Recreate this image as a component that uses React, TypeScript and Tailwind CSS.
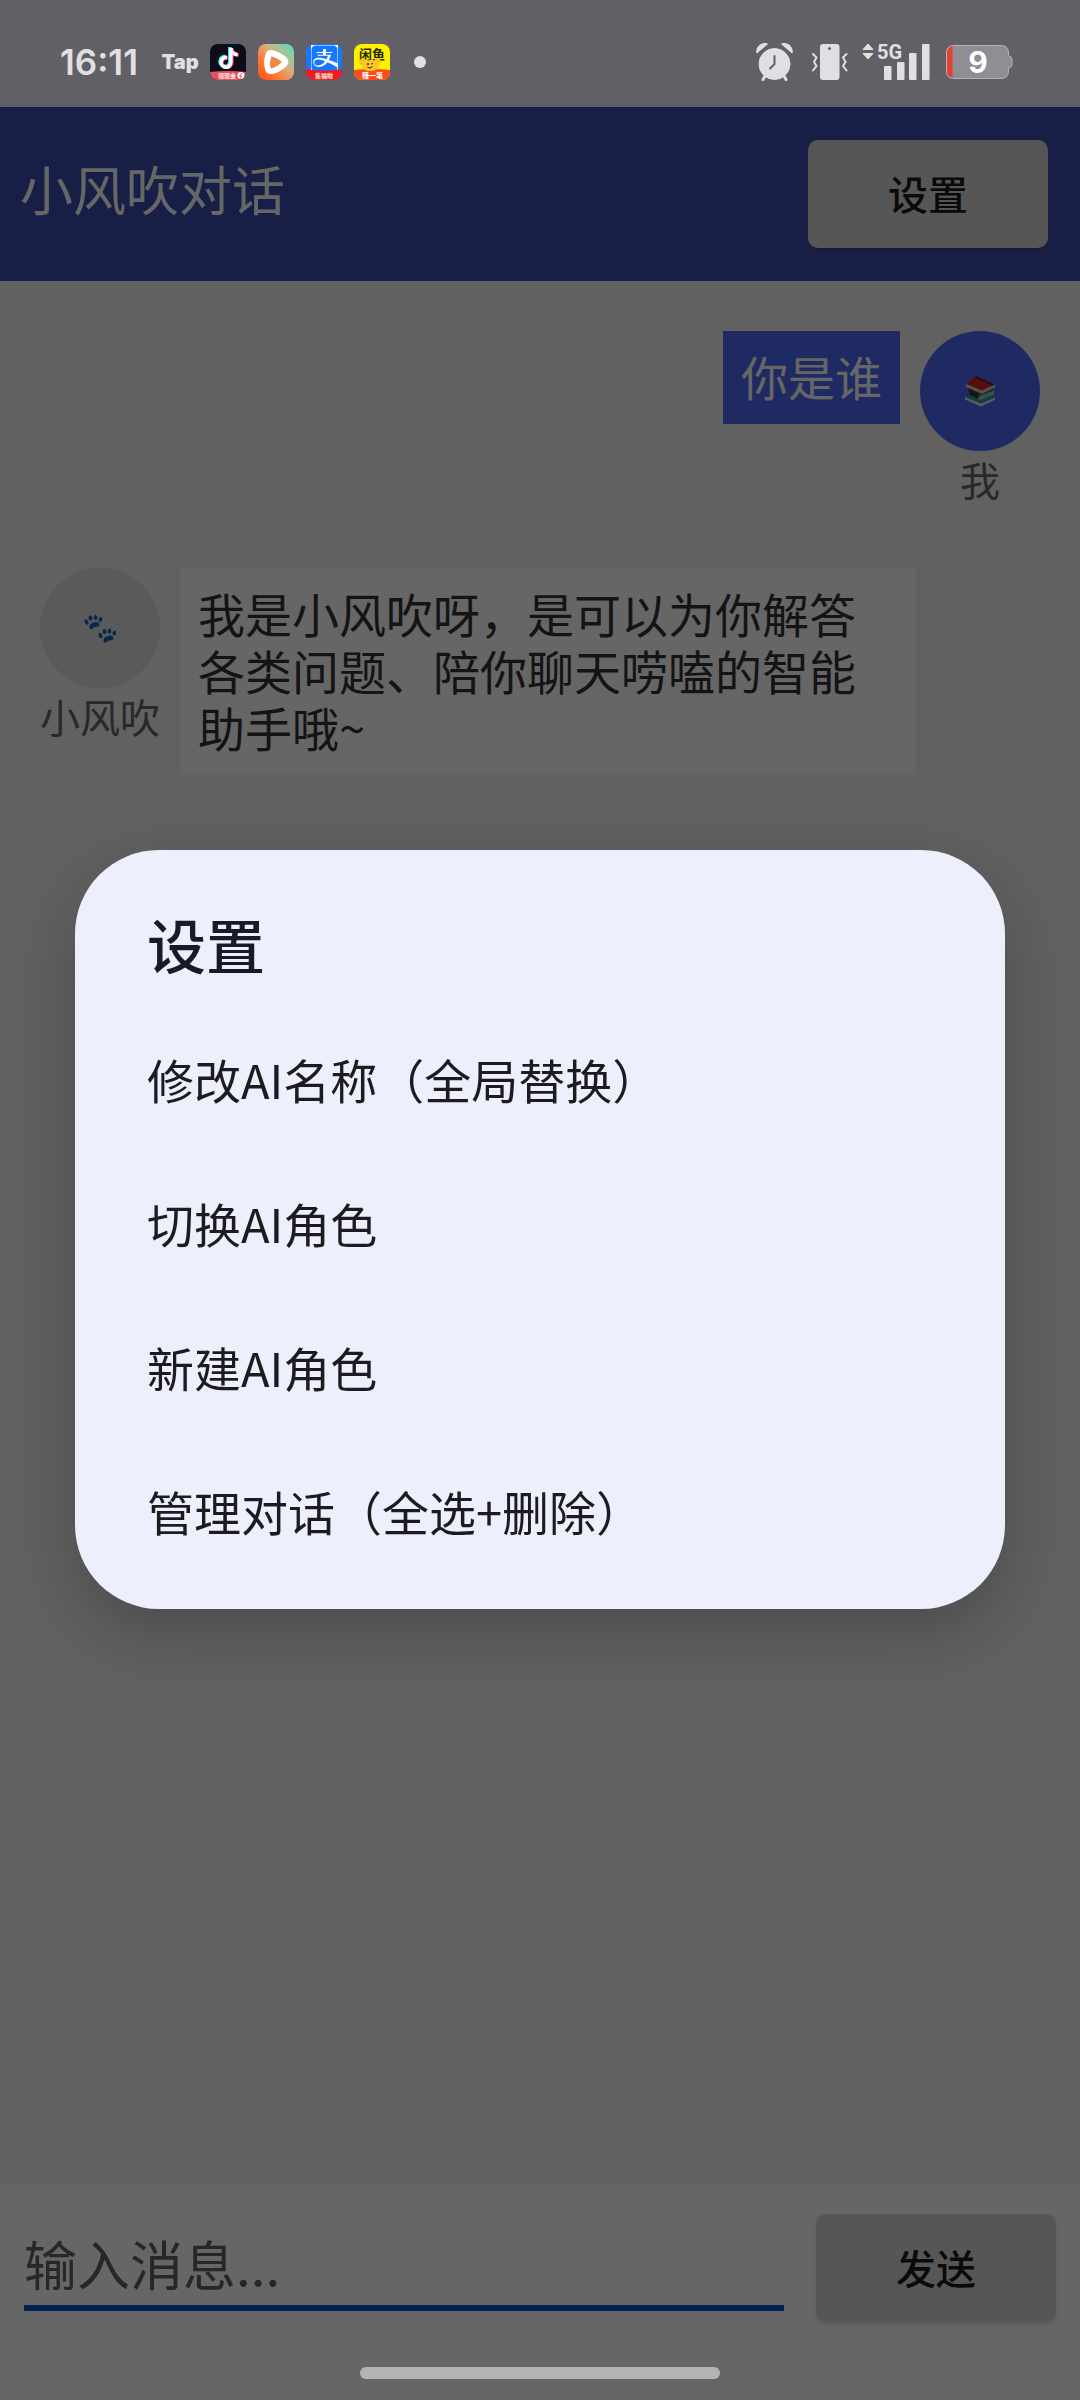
import { useState } from "react";
import { FaAlipay, FaTiktok } from "react-icons/fa";

const menuItems = ["修改AI名称（全局替换）", "切换AI角色", "新建AI角色", "管理对话（全选+删除）"];

function DouyinIcon() {
    return (
        <div className="relative size-9 overflow-hidden rounded-lg bg-[#0d0c18]">
            <FaTiktok className="absolute left-[7px] top-[3px] text-[21px] text-[#25f4ee]" />
            <FaTiktok className="absolute left-[9px] top-[4px] text-[21px] text-[#fe2c55]" />
            <FaTiktok className="absolute left-[8px] top-[4px] text-[21px] text-white" />
            <svg viewBox="0 0 36 9" className="absolute bottom-0 left-0 w-full">
                <path d="M0 1 Q18 -1 36 1 V9 H0 Z" fill="#e8505f" />
                <text x="8" y="7" fontSize="6" fontWeight="700" fill="#ffe9e9">领现金</text>
                <circle cx="31" cy="4.500" r="3.500" fill="#fff" />
                <path d="M32 2 L29.500 5 H31.500 L30.500 7.500" stroke="#e8505f" fill="none" />
            </svg>
        </div>
    );
}

function VideoIcon() {
    return (
        <svg viewBox="0 0 36 36" className="size-9">
            <defs>
                <linearGradient id="video" x1="1" y1="0" x2="0.100" y2="0.900">
                    <stop offset="0" stopColor="#4fe3bd" />
                    <stop offset="0.450" stopColor="#d5b183" />
                    <stop offset="0.750" stopColor="#ff7a35" />
                    <stop offset="1" stopColor="#ff5a1c" />
                </linearGradient>
            </defs>
            <rect width="36" height="36" rx="8" fill="url(#video)" />
            <path d="M9.500 10.500 Q10.500 7 15 8.500 Q23 11 27.500 15.500 Q29.500 18 27 21 Q21 26.500 14 28 Q10 28.500 9 25 Q7 18 9.500 10.500 Z" fill="#fff" stroke="#fff" strokeWidth="4" strokeLinejoin="round" />
            <path d="M14 13.500 Q19 15 22.500 18 Q19 22 13.500 23.500 Q12 18.500 14 13.500 Z" fill="#f08848" stroke="#f08848" strokeWidth="2" strokeLinejoin="round" />
        </svg>
    );
}

function AlipayIcon() {
    return (
        <div className="relative size-9 overflow-hidden rounded-lg bg-[#1677ff]">
            <div className="mx-auto mt-px size-[27px] bg-white">
                <FaAlipay className="size-full scale-110 text-[#1677ff]" />
            </div>
            <svg viewBox="0 0 36 11" className="absolute bottom-0 left-0 w-full">
                <path d="M0 0 Q18 3 36 0 V11 H0 Z" fill="#ec1c24" />
                <text x="9" y="8.500" fontSize="6" fontWeight="700" fill="#ffe9d8">集福啦</text>
            </svg>
        </div>
    );
}

function XianyuIcon() {
    return (
        <svg viewBox="0 0 36 36" className="size-9 overflow-hidden rounded-lg">
            <rect width="36" height="36" fill="#fdf100" />
            <text x="5" y="15" fontSize="13" fontWeight="700" fill="#2a2600">闲鱼</text>
            <path d="M0 26 Q18 24 36 26 V36 H0 Z" fill="#fb4a1c" />
            <circle cx="9" cy="18" r="3.500" fill="#f7c519" />
            <circle cx="23.500" cy="17" r="3" fill="#f7c519" />
            <ellipse cx="16.500" cy="21.500" rx="8.500" ry="5.500" fill="#ffc72e" />
            <circle cx="14" cy="20" r="1" fill="#2a2600" />
            <path d="M17 20 L19 19.500 M13.500 23 Q16 25.500 18.500 22.500" stroke="#2a2600" fill="none" />
            <text x="8" y="33.500" fontSize="7" fontWeight="700" fill="#fff">赚一笔</text>
        </svg>
    );
}

function AlarmIcon() {
    return (
        <svg viewBox="0 0 38 38" className="w-[38px]">
            <g fill="#e0e0e2" stroke="#e0e0e2">
                <circle cx="18.500" cy="21" r="15.500" />
                <path d="M1 9.500 A 8 8 0 0 1 11 1 Z M36 9.500 A 8 8 0 0 0 26 1 Z" strokeWidth="1.500" strokeLinejoin="round" />
                <path d="M9 33 L7 36.500 M28 33 L30 36.500" strokeWidth="3" strokeLinecap="round" />
            </g>
            <path d="M18.500 13 V21 L14 25.500" stroke="#626067" strokeWidth="2" fill="none" strokeLinecap="round" />
        </svg>
    );
}

function VibrateIcon() {
    return (
        <svg viewBox="0 0 38 38" className="w-[38px]">
            <rect x="8" y="1" width="19.500" height="36" rx="3" fill="#e0e0e2" />
            <circle cx="17.500" cy="5.500" r="1.500" fill="#626067" />
            <path d="M1 11 L4.500 14.500 L2 19 L4.500 23 L1 27.500 M34.500 11 L31 14.500 L33.500 19 L31 23 L34.500 27.500" stroke="#e0e0e2" strokeWidth="2" fill="none" strokeLinecap="round" strokeLinejoin="round" />
        </svg>
    );
}

function SignalIcon() {
    return (
        <svg viewBox="0 0 72 38" className="w-[72px] overflow-visible" fill="#e0e0e2">
            <path d="M1 6.500 L6 1 L11 6.500 Z M1 10.500 H11 L6 16 Z" stroke="#e0e0e2" strokeLinejoin="round" />
            <text x="15" y="16" className="font-['Roboto'] text-[20px] font-bold">5G</text>
            <rect x="22" y="23" width="7.500" height="14" rx="1" />
            <rect x="35" y="19" width="7.500" height="18" rx="1" />
            <rect x="47" y="10" width="7.500" height="27" rx="1" />
            <rect x="60" y="1" width="7.500" height="36" rx="1" />
        </svg>
    );
}

function BatteryIcon() {
    return (
        <svg viewBox="0 0 67 34" className="w-[67px]">
            <path d="M8 0.500 H55 Q62.500 0.500 62.500 8 V11 Q66 11.500 66 14 V20 Q66 22.500 62.500 23 V26 Q62.500 33.500 55 33.500 H8 Q0.500 33.500 0.500 26 V8 Q0.500 0.500 8 0.500 Z" fill="#8f8e94" stroke="#b3b2b7" />
            <path d="M6.500 1 V33 Q1 31.500 1 26 V8 Q1 2.500 6.500 1 Z" fill="#e8402f" />
            <text x="32" y="28" textAnchor="middle" className="font-['Inter'] text-[30px] font-bold" fill="#fff">9</text>
        </svg>
    );
}

function StatusBar() {
    return (
        <div className="relative z-20 flex h-[107px] items-center justify-between bg-[#626067] pl-[60px] pr-[67px] pt-4 text-[#e0e0e2]">
            <div className="flex items-center gap-3">
                <span className="mr-3 w-[78px] font-['Inter'] text-[35px] leading-9 font-semibold">16:11</span>
                <span className="flex w-9 justify-center font-['Inter'] text-[20px] leading-9 font-black">Tap</span>
                <DouyinIcon />
                <VideoIcon />
                <AlipayIcon />
                <XianyuIcon />
                <span className="ml-3 size-3 rounded-full bg-[#e0e0e2]" />
            </div>
            <div className="flex items-center gap-3">
                <div className="flex items-center gap-[18px]">
                    <AlarmIcon />
                    <VibrateIcon />
                </div>
                <SignalIcon />
                <BatteryIcon />
            </div>
        </div>
    );
}

function Books() {
    return (
        <svg viewBox="0 0 32 32" className="size-8">
            <path d="M1 22 L12 18 L31 23 L17 31 Z" fill="#2b9aa0" />
            <path d="M1 22 L17 28.500 L31 22.500 V25 L17 31.500 L1 24.500 Z" fill="#cfe6ea" />
            <path d="M4 16 L15 12 L30 15 L17 23 Z" fill="#2f6b4f" />
            <path d="M6 17 L15 21 L30 15.500 V20 L16 25 L6 20 Z" fill="#8ccbb0" />
            <path d="M4 12 L6 20 L14 24 L15 18 Z" fill="#47331f" />
            <path d="M2 9 L12 1 L30 9 L18 16 Z" fill="#d42a20" />
            <path d="M12 1 L30 9 L29 11 L11 3 Z" fill="#7a1c14" />
            <path d="M2 9 L18 15.500 L31 9.500 V12.500 L18 19 L2 12 Z" fill="#d8c9c4" />
        </svg>
    );
}

function Paws() {
    return (
        <svg viewBox="0 -2 32 32" className="size-8" fill="#1463c4">
            <g id="paw">
                <path d="M5.500 14 Q5 10 8.500 9 Q14 6.500 15.500 10 Q16 12.500 12.500 12.800 Q10 13 8.500 14.500 Q6.500 16 5.500 14 Z" />
                <ellipse cx="2.500" cy="8" rx="1.800" ry="2.700" transform="rotate(-25 2.500 8)" />
                <ellipse cx="6.500" cy="4" rx="1.900" ry="2.500" transform="rotate(-10 6.500 4)" />
                <ellipse cx="11.500" cy="3.500" rx="1.900" ry="2.500" />
                <ellipse cx="16.500" cy="5.500" rx="1.800" ry="2.500" transform="rotate(20 16.500 5.500)" />
            </g>
            <use href="#paw" x="14" y="13.500" />
        </svg>
    );
}

export default function App() {
    const [open, setOpen] = useState(true);
    const [message, setMessage] = useState("");

    return (
        <div lang="zh-CN" className="flex min-h-screen flex-col bg-[#f3f3f3] font-['Noto_Sans_CJK_SC',sans-serif]">
            <StatusBar />

            <header className="flex items-center justify-between bg-[#3e4eb0] py-[33px] pl-5 pr-8">
                <h1 className="pb-3 text-[53px] leading-[64px] text-white">小风吹对话</h1>
                <button
                    onClick={() => setOpen(true)}
                    className="h-[108px] w-60 rounded-[10px] bg-[#d6d7d7] pb-0.5 text-[40px] font-medium text-black/90 shadow-md"
                >
                    设置
                </button>
            </header>

            <main className="flex flex-1 flex-col gap-[61px] px-10 pt-[50px]">
                {/* My message */}
                <div className="flex items-start justify-end gap-5">
                    <p className="bg-[#4b69f2] px-[18px] pt-4 pb-5 text-[47px] leading-[57px] text-white">你是谁</p>
                    <div className="w-[120px] text-center">
                        <div className="flex size-[120px] items-center justify-center rounded-full bg-[#4b69f2]">
                            <Books />
                        </div>
                        <div className="text-[40px] leading-[56px] text-[#666666]">我</div>
                    </div>
                </div>

                {/* AI message */}
                <div className="flex items-start gap-5">
                    <div className="w-[120px] shrink-0 text-center">
                        <div className="flex size-[120px] items-center justify-center rounded-full bg-[#e0e0e0]">
                            <Paws />
                        </div>
                        <div className="text-[40px] leading-[56px] whitespace-nowrap text-[#666666]">小风吹</div>
                    </div>
                    <p className="max-w-[736px] bg-white px-[18px] pt-4 pb-5 text-[47px] leading-[57px] text-[#333333]">
                        我是小风吹呀，是可以为你解答各类问题、陪你聊天唠嗑的智能助手哦~
                    </p>
                </div>
            </main>

            <form
                onSubmit={(e) => e.preventDefault()}
                className="flex items-center gap-8 bg-white px-6 pt-[30px] pb-[78px]"
            >
                <input
                    type="text"
                    aria-label="输入消息"
                    placeholder="输入消息..."
                    value={message}
                    onChange={(e) => setMessage(e.target.value)}
                    className="h-[86px] min-w-0 flex-1 border-b-6 border-[#0250c6] pb-1 text-[53px] outline-none placeholder:text-[#616161]"
                />
                <button className="h-[108px] w-60 rounded-[10px] bg-[#d6d7d7] pb-0.5 text-[40px] font-medium text-black/90 shadow-md">
                    发送
                </button>
            </form>

            {/* Settings dialog */}
            {open && (
                <div className="fixed inset-0 z-10 flex items-center justify-center bg-black/60 px-[75px] pt-[107px] pb-12">
                    <div
                        role="dialog"
                        aria-labelledby="settings-title"
                        className="w-full rounded-[84px] bg-[#eeeffd] pt-[54px] pb-[26px] shadow-[0_24px_72px_rgba(0,0,0,0.25)]"
                    >
                        <h2 id="settings-title" className="mb-[23px] px-[72px] text-[59px] leading-[80px] font-medium text-[#191a26]">设置</h2>
                        {menuItems.map((item) => (
                            <button
                                key={item}
                                onClick={() => setOpen(false)}
                                className="block h-36 w-full px-[72px] text-left text-[47px] text-[#1c1c20]"
                            >
                                {item}
                            </button>
                        ))}
                    </div>
                </div>
            )}

            <div className="fixed bottom-[21px] left-1/2 z-20 h-3 w-1/3 -translate-x-1/2 rounded-full bg-[#b4b4b4]" />
        </div>
    );
}
